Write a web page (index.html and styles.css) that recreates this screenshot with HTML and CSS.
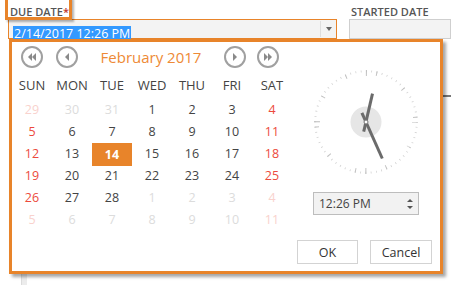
FILE: index.html
```html
<!DOCTYPE html>
<html lang="en">

<head>
    <meta charset="UTF-8">
    <title>Due date picker</title>
    <link rel="stylesheet" href="styles.css">
</head>

<body>
    <div class="page">
        <div class="fields">
            <div class="field due">
                <label class="field-label">DUE DATE<span class="req">*</span></label>
                <div class="date-input focused">
                    <span class="value"><span class="selected">2/14/2017 12:26 PM</span></span>
                    <span class="drop-btn"><span class="caret"></span></span>
                </div>
                <div class="under-strip"></div>
            </div>
            <div class="field started">
                <label class="field-label">STARTED DATE</label>
                <div class="date-input"></div>
                <div class="under-bar"></div>
            </div>
        </div>

        <div class="mark label-mark"></div>

        <div class="picker">
            <div class="calendar">
                <div class="cal-nav">
                    <span class="nav-btn"><span class="tri left"></span><span class="tri left"></span></span>
                    <span class="nav-btn"><span class="tri left"></span></span>
                    <span class="month">February 2017</span>
                    <span class="nav-btn"><span class="tri right"></span></span>
                    <span class="nav-btn"><span class="tri right"></span><span class="tri right"></span></span>
                </div>
                <div class="cal-head">
                    <span>SUN</span><span>MON</span><span>TUE</span><span>WED</span><span>THU</span><span>FRI</span><span>SAT</span>
                </div>
                <div class="cal-days">
                    <span class="other wkend">29</span><span class="other">30</span><span class="other">31</span><span>1</span><span>2</span><span>3</span><span class="wkend">4</span>
                    <span class="wkend">5</span><span>6</span><span>7</span><span>8</span><span>9</span><span>10</span><span class="wkend">11</span>
                    <span class="wkend">12</span><span>13</span><span class="sel">14</span><span>15</span><span>16</span><span>17</span><span class="wkend">18</span>
                    <span class="wkend">19</span><span>20</span><span>21</span><span>22</span><span>23</span><span>24</span><span class="wkend">25</span>
                    <span class="wkend">26</span><span>27</span><span>28</span><span class="other">1</span><span class="other">2</span><span class="other">3</span><span class="other wkend">4</span>
                    <span class="other wkend">5</span><span class="other">6</span><span class="other">7</span><span class="other">8</span><span class="other">9</span><span class="other">10</span><span class="other wkend">11</span>
                </div>
            </div>

            <div class="clock-panel">
                <svg class="clock" width="110" height="110" viewBox="-55 -55 110 110">
                    <circle r="50.8" fill="none" stroke="#d2d2d2" stroke-width="2" stroke-dasharray="0.8 4.52" stroke-dashoffset="0.4" />
                    <circle r="49.5" fill="none" stroke="#c2c2c2" stroke-width="4.5" stroke-dasharray="1 30.1" stroke-dashoffset="0.5" transform="rotate(30)" />
                    <circle r="49" fill="none" stroke="#bdbdbd" stroke-width="6" stroke-dasharray="1 75.97" stroke-dashoffset="0.5" />
                    <circle r="15.5" fill="#e6e6e6" />
                    <line x1="-4.1" y1="-9.1" x2="16.3" y2="36.5" stroke="#6b6b6b" stroke-width="3" />
                    <line x1="-2.3" y1="9.7" x2="6.5" y2="-28.3" stroke="#6b6b6b" stroke-width="3" />
                    <circle r="2" fill="#fff" stroke="#777" stroke-width="1" />
                </svg>
                <div class="time-input">
                    <span>12:26 PM</span>
                    <span class="spin"><span class="up"></span><span class="down"></span></span>
                </div>
                <div class="actions">
                    <button class="btn">OK</button>
                    <button class="btn">Cancel</button>
                </div>
            </div>
        </div>
    </div>
</body>

</html>
```

FILE: styles.css
```css
body {
    margin: 0;
    background-color: #ffffff;
    font-family: "Open Sans", "Noto Sans", sans-serif;
    color: #444;
}

.page {
    position: relative;
    width: 451px;
    height: 285px;
    overflow: hidden;
}

.fields {
    display: flex;
}

.field.due {
    margin-left: 8px;
    width: 329px;
}

.field.started {
    flex: 1;
    margin-left: 12px;
}

.field-label {
    display: block;
    height: 19px;
    box-sizing: border-box;
    padding: 4px 0 0 2px;
    font-size: 11px;
    line-height: 15px;
    font-weight: 600;
    color: #555;
}

.req {
    color: #c0392b;
}

.date-input {
    display: flex;
    height: 20px;
    box-sizing: border-box;
    border: 1px solid #cfcfcf;
    background-color: #f3f3f3;
}

.date-input.focused {
    border-color: #e8842a;
}

.value {
    flex: 1;
    padding: 1px 0 0 4px;
}

.selected {
    display: inline-block;
    background-color: #3399ff;
    color: #ffffff;
    font-size: 12.5px;
    line-height: 15px;
    padding: 0 1px;
}

.drop-btn {
    width: 15px;
    margin: 1px 0;
    border-left: 1px solid #dedede;
    display: flex;
    align-items: center;
    justify-content: center;
}

.caret {
    width: 0;
    height: 0;
    border-left: 3.5px solid transparent;
    border-right: 3.5px solid transparent;
    border-top: 4px solid #666;
}

.under-strip {
    margin: 60px 0 0 13px;
    width: 5px;
    height: 200px;
    background-color: #ececec;
    border-left: 1px solid #dcdcdc;
}

.under-bar {
    margin-top: 56px;
    height: 2px;
    background-color: #777;
}

/* annotation boxes */
.mark {
    position: absolute;
    border: 3px solid #e8842a;
    box-shadow: 2px 2px 2px rgba(0, 0, 0, 0.3);
}

.label-mark {
    left: 5px;
    top: -3px;
    width: 61px;
    height: 17px;
}

.picker {
    position: absolute;
    left: 9px;
    top: 39px;
    width: 434px;
    height: 235px;
    box-sizing: border-box;
    border: 3px solid #e8842a;
    background-color: #ffffff;
    box-shadow: 3px 3px 3px rgba(0, 0, 0, 0.35);
    display: flex;
}

.calendar {
    width: 280px;
}

.cal-nav {
    display: flex;
    align-items: center;
    height: 22px;
    padding: 4px 13px 0 9px;
}

.nav-btn {
    width: 22px;
    height: 22px;
    box-sizing: border-box;
    border: 2px solid #a0a0a0;
    border-radius: 50%;
    display: flex;
    align-items: center;
    justify-content: center;
}

.nav-btn + .nav-btn {
    margin-left: 13px;
}

.month + .nav-btn + .nav-btn {
    margin-left: 11px;
}

.tri {
    width: 0;
    height: 0;
    border-top: 4px solid transparent;
    border-bottom: 4px solid transparent;
}

.tri.left {
    border-right: 4px solid #8a8a8a;
}

.tri.right {
    border-left: 4px solid #8a8a8a;
}

.month {
    flex: 1;
    text-align: center;
    color: #ee8a36;
    font-size: 15px;
    line-height: 22px;
}

.cal-head,
.cal-days {
    display: grid;
    grid-template-columns: repeat(7, 40px);
    grid-auto-rows: 22px;
    text-align: center;
}

.cal-head {
    margin-top: 6px;
    font-size: 13px;
    line-height: 22px;
    color: #444;
}

.cal-days {
    margin-top: 3px;
    font-size: 12.5px;
    line-height: 22px;
}

.cal-days .wkend {
    color: #ec4a3c;
}

.cal-days .other {
    color: #dcdcdc;
}

.cal-days .other.wkend {
    color: #f9d2cd;
}

.cal-days .sel {
    background-color: #e8842a;
    color: #ffffff;
    font-weight: bold;
    height: 23px;
    line-height: 23px;
}

.clock-panel {
    flex: 1;
    display: flex;
    flex-direction: column;
    align-items: center;
    padding-top: 25px;
}

.clock {
    display: block;
}

.time-input {
    margin-top: 15px;
    width: 106px;
    height: 23px;
    box-sizing: border-box;
    border: 1px solid #bdbdbd;
    background-color: #f2f2f2;
    display: flex;
    align-items: center;
    justify-content: space-between;
    padding: 0 5px 0 5px;
    font-size: 12px;
    color: #444;
}

.spin {
    display: flex;
    flex-direction: column;
    gap: 4px;
}

.spin .up,
.spin .down {
    width: 0;
    height: 0;
    border-left: 3px solid transparent;
    border-right: 3px solid transparent;
}

.spin .up {
    border-bottom: 3px solid #555;
}

.spin .down {
    border-top: 3px solid #555;
}

.actions {
    align-self: flex-end;
    margin: 25px 8px 0 0;
    display: flex;
    gap: 12px;
}

.btn {
    height: 24px;
    width: 61px;
    border: 1px solid #d3d3d3;
    background-color: #ffffff;
    font-family: "Open Sans", "Noto Sans", sans-serif;
    font-size: 12.5px;
    color: #333;
    padding: 0;
}

.btn + .btn {
    width: 62px;
}
```
